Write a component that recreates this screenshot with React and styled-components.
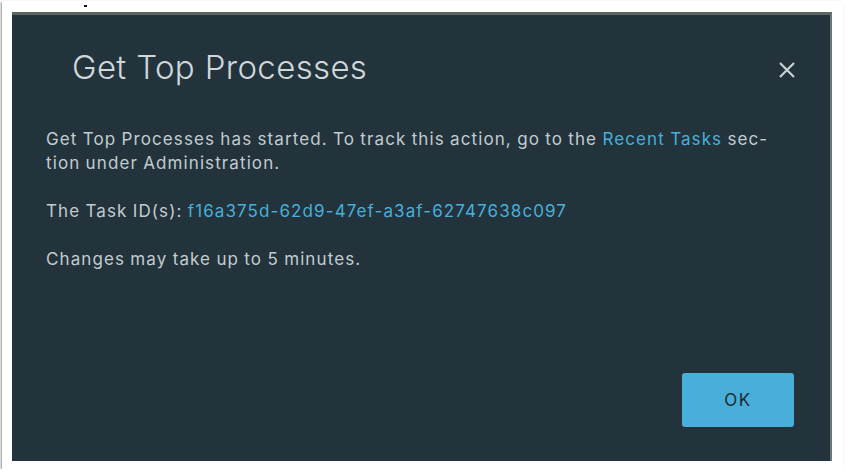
import React from "react";
import styled, { createGlobalStyle } from "styled-components";

const GlobalStyle = createGlobalStyle`
  html, body {
    margin: 0;
    padding: 0;
    background: #ffffff;
  }
  body {
    font-family: "Inter", "Liberation Sans", sans-serif;
  }
`;

const Frame = styled.div`
  width: 841px;
  height: 468px;
  margin: 1px 0 0 2px;
  box-sizing: border-box;
  background: #ffffff;
  box-shadow: -1px 1px 2px rgba(0, 0, 0, 0.45);
  padding: 4px 11px 8px 10px;
  display: flex;
  flex-direction: column;
`;

const Mark = styled.div`
  width: 3px;
  height: 2px;
  margin-left: 72px;
  margin-bottom: 5px;
  background: #111;
`;

const Panel = styled.div`
  flex: 1;
  background: #22333c;
  border-top: 3px solid #5a665f;
  border-right: 2px solid #6c7875;
  display: flex;
  flex-direction: column;
  padding: 0 36px 34px 34px;
`;

const Header = styled.div`
  display: flex;
  align-items: center;
  justify-content: space-between;
  margin-top: 32px;
  padding-left: 26px;
`;

const Title = styled.h1`
  margin: 0;
  font-family: "Inter", "Liberation Sans", sans-serif;
  font-weight: 300;
  font-size: 33px;
  line-height: 40px;
  letter-spacing: 0.35px;
  color: #cfd7db;
`;

const Close = styled.button`
  border: none;
  background: transparent;
  padding: 0;
  margin: 6px -5px 0 0;
  width: 24px;
  height: 24px;
  display: flex;
  align-items: center;
  justify-content: center;
  cursor: pointer;
`;

const Body = styled.div`
  margin-top: 40px;
`;

const Para = styled.p`
  margin: 0 0 24px;
  font-size: 17px;
  line-height: 24px;
  letter-spacing: 1.1px;
  word-spacing: -0.6px;
  color: #c3cbcf;
  white-space: nowrap;
`;

const Link = styled.a`
  color: #49afd9;
  text-decoration: none;
`;

const Footer = styled.div`
  margin-top: auto;
  display: flex;
  justify-content: flex-end;
`;

const OkButton = styled.button`
  width: 112px;
  height: 54px;
  border: none;
  border-radius: 3px;
  background: #49afd9;
  color: #1c2b33;
  font-family: "Inter", "Liberation Sans", sans-serif;
  font-size: 17px;
  font-weight: 400;
  letter-spacing: 1.5px;
  cursor: pointer;
`;

export default function App() {
  return (
    <>
      <GlobalStyle />
      <Frame>
        <Mark />
        <Panel>
          <Header>
            <Title>Get Top Processes</Title>
            <Close aria-label="Close">
              <svg width="18" height="18" viewBox="0 0 18 18">
                <path
                  d="M2 2 L16 16 M16 2 L2 16"
                  stroke="#c9d0d3"
                  strokeWidth="2.2"
                  fill="none"
                />
              </svg>
            </Close>
          </Header>
          <Body>
            <Para>
              Get Top Processes has started. To track this action, go to the{" "}
              <Link>Recent Tasks</Link> sec-
              <br />
              tion under Administration.
            </Para>
            <Para>
              The Task ID(s): <Link>f16a375d-62d9-47ef-a3af-62747638c097</Link>
            </Para>
            <Para>Changes may take up to 5 minutes.</Para>
          </Body>
          <Footer>
            <OkButton>OK</OkButton>
          </Footer>
        </Panel>
      </Frame>
    </>
  );
}
